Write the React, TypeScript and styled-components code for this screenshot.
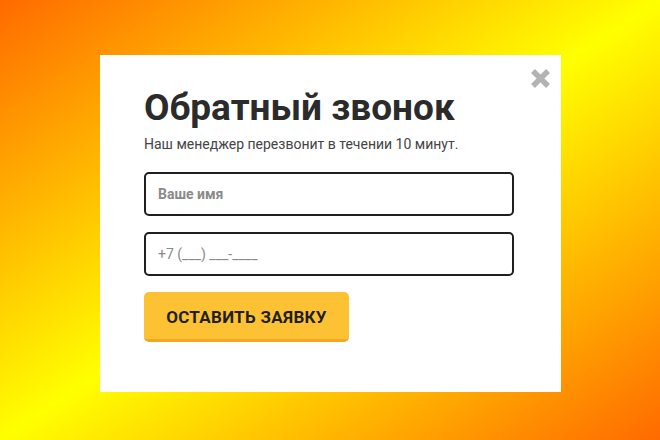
import React from "react";
import styled, { createGlobalStyle } from "styled-components";

const Global = createGlobalStyle`
  html, body { margin: 0; padding: 0; }
  body { font-family: Roboto, "Noto Sans", Arial, sans-serif; }
  * { box-sizing: border-box; }
`;

const Page = styled.div`
  width: 660px;
  height: 440px;
  overflow: hidden;
  background: linear-gradient(to bottom right, #ff6a00 0%, #ffff00 50%, #ff6a00 100%);
  padding: 55px 0 0 100px;
`;

const Card = styled.div`
  position: relative;
  width: 461px;
  height: 337px;
  background: #ffffff;
  padding: 31px 47px 0 44px;
  display: flex;
  flex-direction: column;
`;

const Close = styled.button`
  position: absolute;
  top: 13px;
  right: 10px;
  width: 21px;
  height: 21px;
  padding: 0;
  border: none;
  background: transparent;
  cursor: pointer;
  display: flex;
`;

const Title = styled.h1`
  margin: 0;
  font-family: Roboto, Arial, sans-serif;
  font-weight: 700;
  font-size: 37px;
  line-height: 43px;
  color: #2b2b2b;
`;

const Subtitle = styled.p`
  margin: 7px 0 0 0;
  font-size: 14px;
  line-height: 16px;
  font-weight: 400;
  color: #444;
`;

const Form = styled.form`
  margin-top: 20px;
  display: flex;
  flex-direction: column;
  gap: 16px;
  align-items: flex-start;
`;

const Field = styled.input<{ $bold?: boolean }>`
  width: 370px;
  height: 44px;
  border: 2px solid #1f1f1f;
  border-radius: 5px;
  padding: 0 12px;
  font-family: Roboto, Arial, sans-serif;
  font-size: 14px;
  font-weight: ${(p) => (p.$bold ? 700 : 400)};
  color: #333;
  outline: none;
  &::placeholder {
    color: #8a8a8a;
    opacity: 1;
  }
`;

const Submit = styled.button`
  width: 205px;
  height: 50px;
  border: none;
  border-bottom: 3px solid #f5a623;
  border-radius: 5px;
  background: #fdc233;
  font-family: Roboto, Arial, sans-serif;
  font-weight: 700;
  font-size: 17px;
  letter-spacing: 0.3px;
  color: #1f1f1f;
  text-transform: uppercase;
  cursor: pointer;
  padding: 2px 0 0 0;
`;

export default function App() {
  return (
    <>
      <Global />
      <Page>
        <Card>
          <Close aria-label="Закрыть">
            <svg width="21" height="21" viewBox="0 0 21 21">
              <path d="M3 3 L18 18 M18 3 L3 18" stroke="#b3b3b3" strokeWidth="5.5" strokeLinecap="butt" />
            </svg>
          </Close>
          <Title>Обратный звонок</Title>
          <Subtitle>Наш менеджер перезвонит в течении 10 минут.</Subtitle>
          <Form onSubmit={(e) => e.preventDefault()}>
            <Field $bold placeholder="Ваше имя" />
            <Field placeholder="+7 (___) ___-____" />
            <Submit type="submit">Оставить заявку</Submit>
          </Form>
        </Card>
      </Page>
    </>
  );
}
